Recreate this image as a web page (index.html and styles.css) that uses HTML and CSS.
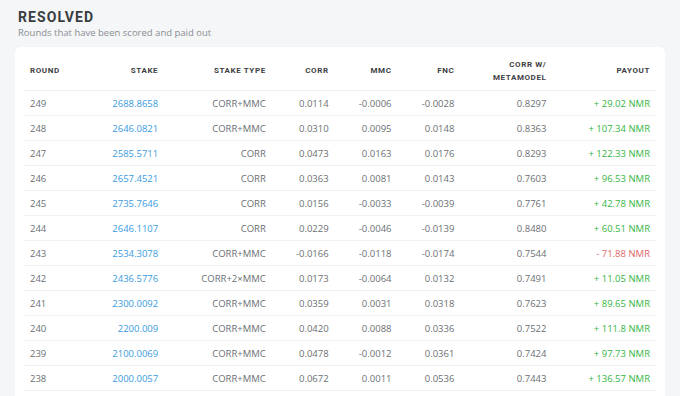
FILE: index.html
```html
<!DOCTYPE html>
<html>
<head>
<meta charset="utf-8">
<link rel="stylesheet" href="styles.css">
</head>
<body>
<div class="page">
  <h1 class="title">RESOLVED</h1>
  <p class="subtitle">Rounds that have been scored and paid out</p>
  <div class="card">
    <table class="tbl">
      <thead>
        <tr>
          <th class="left">ROUND</th>
          <th>STAKE</th>
          <th>STAKE TYPE</th>
          <th>CORR</th>
          <th>MMC</th>
          <th>FNC</th>
          <th>CORR W/<br>METAMODEL</th>
          <th>PAYOUT</th>
        </tr>
      </thead>
      <tbody>
        <tr><td class="left">249</td><td class="stake">2688.8658</td><td>CORR+MMC</td><td>0.0114</td><td>-0.0006</td><td>-0.0028</td><td>0.8297</td><td class="pos">+ 29.02 NMR</td></tr>
        <tr><td class="left">248</td><td class="stake">2646.0821</td><td>CORR+MMC</td><td>0.0310</td><td>0.0095</td><td>0.0148</td><td>0.8363</td><td class="pos">+ 107.34 NMR</td></tr>
        <tr><td class="left">247</td><td class="stake">2585.5711</td><td>CORR</td><td>0.0473</td><td>0.0163</td><td>0.0176</td><td>0.8293</td><td class="pos">+ 122.33 NMR</td></tr>
        <tr><td class="left">246</td><td class="stake">2657.4521</td><td>CORR</td><td>0.0363</td><td>0.0081</td><td>0.0143</td><td>0.7603</td><td class="pos">+ 96.53 NMR</td></tr>
        <tr><td class="left">245</td><td class="stake">2735.7646</td><td>CORR</td><td>0.0156</td><td>-0.0033</td><td>-0.0039</td><td>0.7761</td><td class="pos">+ 42.78 NMR</td></tr>
        <tr><td class="left">244</td><td class="stake">2646.1107</td><td>CORR</td><td>0.0229</td><td>-0.0046</td><td>-0.0139</td><td>0.8480</td><td class="pos">+ 60.51 NMR</td></tr>
        <tr><td class="left">243</td><td class="stake">2534.3078</td><td>CORR+MMC</td><td>-0.0166</td><td>-0.0118</td><td>-0.0174</td><td>0.7544</td><td class="neg">- 71.88 NMR</td></tr>
        <tr><td class="left">242</td><td class="stake">2436.5776</td><td>CORR+2×MMC</td><td>0.0173</td><td>-0.0064</td><td>0.0132</td><td>0.7491</td><td class="pos">+ 11.05 NMR</td></tr>
        <tr><td class="left">241</td><td class="stake">2300.0092</td><td>CORR+MMC</td><td>0.0359</td><td>0.0031</td><td>0.0318</td><td>0.7623</td><td class="pos">+ 89.65 NMR</td></tr>
        <tr><td class="left">240</td><td class="stake">2200.009</td><td>CORR+MMC</td><td>0.0420</td><td>0.0088</td><td>0.0336</td><td>0.7522</td><td class="pos">+ 111.8 NMR</td></tr>
        <tr><td class="left">239</td><td class="stake">2100.0069</td><td>CORR+MMC</td><td>0.0478</td><td>-0.0012</td><td>0.0361</td><td>0.7424</td><td class="pos">+ 97.73 NMR</td></tr>
        <tr><td class="left">238</td><td class="stake">2000.0057</td><td>CORR+MMC</td><td>0.0672</td><td>0.0011</td><td>0.0536</td><td>0.7443</td><td class="pos">+ 136.57 NMR</td></tr>
      </tbody>
    </table>
  </div>
</div>
</body>
</html>
```
FILE: styles.css
```css
html, body {
  margin: 0;
  padding: 0;
  background: #f4f6f8;
  overflow: hidden;
}
.page {
  padding: 9px 15px 0 15px;
  font-family: "Open Sans", "Noto Sans", sans-serif;
}
.title {
  margin: 0 0 0 3px;
  font-family: "Roboto", "Liberation Sans", sans-serif;
  font-weight: 700;
  font-size: 14px;
  line-height: 16px;
  letter-spacing: 1.1px;
  color: #3a3d40;
}
.subtitle {
  margin: 1px 0 0 3px;
  font-size: 9.5px;
  line-height: 13px;
  color: #8a8e92;
}
.card {
  margin-top: 8px;
  background: #fff;
  border-radius: 6px;
  padding: 0 9px;
  height: 400px;
}
.tbl {
  width: 100%;
  border-collapse: collapse;
}
.tbl th {
  font-family: "Roboto", "Liberation Sans", sans-serif;
  font-weight: 700;
  font-size: 8px;
  letter-spacing: 0.6px;
  line-height: 13px;
  color: #3d4043;
  text-align: right;
  height: 43px;
  padding: 5px 6px 0 6px;
  border-bottom: 1px solid #eef0f2;
  box-sizing: border-box;
}
.tbl td {
  font-size: 9.5px;
  color: #6b6f73;
  text-align: right;
  height: 25px;
  padding: 1px 6px 0 6px;
  border-bottom: 1px solid #eef0f2;
  box-sizing: border-box;
  white-space: nowrap;
}
.tbl .left { text-align: left; }
.tbl .stake { color: #3a9be0; }
.tbl .pos { color: #35b544; }
.tbl .neg { color: #e06666; }
```
